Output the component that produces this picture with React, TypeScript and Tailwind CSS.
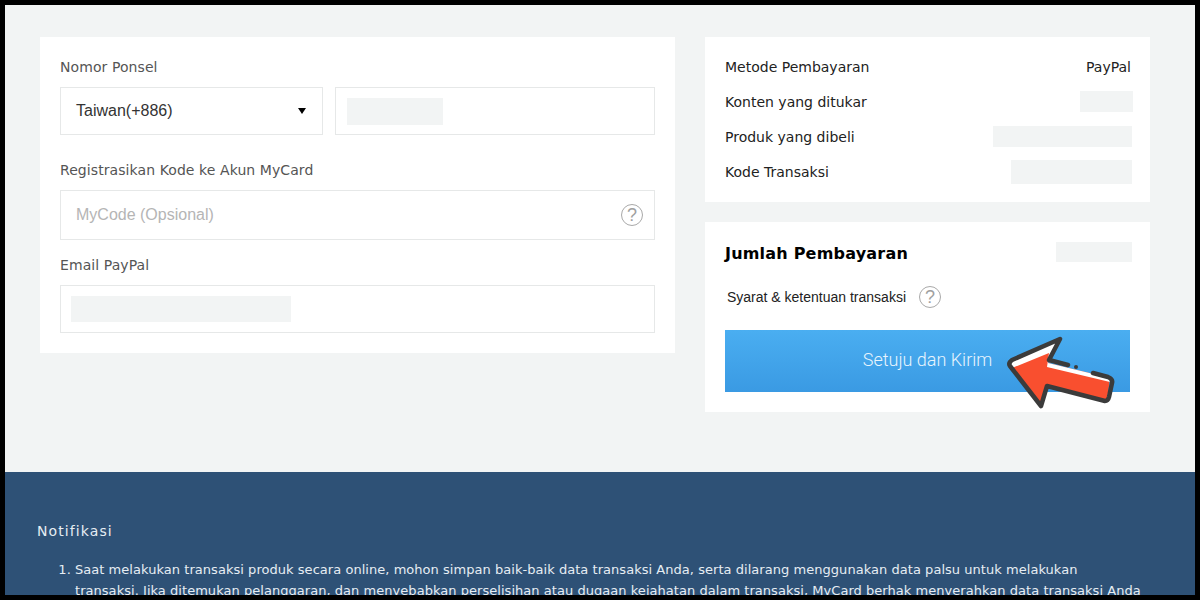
import React from 'react';

const verdana = 'font-["DejaVu_Sans",sans-serif]';
const arial = 'font-["Liberation_Sans",sans-serif]';

function Blank({ className }: { className: string }) {
  return <div className={`bg-[#f2f4f4] ${className}`} />;
}

function Help() {
  return (
    <span className={`flex h-[22px] w-[22px] shrink-0 items-center justify-center rounded-full border border-[#a9a9a9] text-[18px] leading-none text-[#a0a0a0] ${arial}`}>
      ?
    </span>
  );
}

function Arrow() {
  return (
    <svg className="absolute left-[275px] top-0 h-[85px] w-[130px]" viewBox="0 0 130 85" fill="none">
      <path d="M10 33 L58 11 L48 33 L110 48 L107 70 L47 55 L41 75 Z" fill="#f94f2f" />
      <path d="M10 33 L58 11 L50 24 L48 33 L110 48 L110 52 L47 37 L49 23 L12 38 Z" fill="#ffffff" />
      <path
        d="M68 35 L49 30 L60 9 L12 30 Q8 33 10 36 L41 76 L47 56 L105 71 Q108 71 109 67 L112 53 Q113 49 108 47 L93 43"
        stroke="#3b3b3b"
        strokeWidth="4.5"
        strokeLinecap="round"
        strokeLinejoin="round"
      />
      <circle cx="76" cy="37" r="2" fill="#3b3b3b" />
    </svg>
  );
}

export default function App() {
  return (
    <div className="h-[600px] w-[1200px] overflow-hidden border-[5px] border-black bg-[#f2f4f4]">
      <div className="flex h-[467px] gap-[30px] pl-[35px] pr-[45px] pt-[32px]">
        <div className={`h-[316px] w-[635px] bg-white px-5 pt-[20px] ${verdana}`}>
          <div className="text-sm leading-5 tracking-[0.08px] text-[#555]">Nomor Ponsel</div>
          <div className="mt-[10px] flex gap-3">
            <div className={`flex h-12 w-[263px] items-center justify-between border border-[#e6e8e8] pl-[15px] pr-[15px] text-base text-[#333] ${arial}`}>
              <span>Taiwan(+886)</span>
              <span className="mr-px h-0 w-0 border-x-[4.5px] border-t-[6px] border-x-transparent border-t-black" />
            </div>
            <div className="flex h-12 w-[320px] items-center border border-[#e6e8e8] pl-[11px]">
              <Blank className="h-[27px] w-24" />
            </div>
          </div>
          <div className="mt-[25px] text-sm leading-5 tracking-[0.08px] text-[#555]">Registrasikan Kode ke Akun MyCard</div>
          <div className={`mt-[10px] flex h-[50px] items-center justify-between border border-[#e6e8e8] pl-[15px] pr-[11px] text-base text-[#b5b5b5] ${arial}`}>
            <span>MyCode (Opsional)</span>
            <Help />
          </div>
          <div className="mt-[15px] text-sm leading-5 tracking-[0.08px] text-[#555]">Email PayPal</div>
          <div className="mt-[10px] flex h-[48px] items-center border border-[#e6e8e8] pl-[10px]">
            <Blank className="h-[26px] w-[220px]" />
          </div>
        </div>

        <div className="flex w-[445px] flex-col gap-5">
          <div className={`flex h-[165px] flex-col bg-white pl-5 pr-[18px] pt-[17px] text-sm text-[#222] ${verdana}`}>
            <div className="flex h-[25px] items-center justify-between">
              <span>Metode Pembayaran</span>
              <span className="pr-px">PayPal</span>
            </div>
            <div className="mt-[10px] flex h-[25px] items-center justify-between">
              <span>Konten yang ditukar</span>
              <Blank className="-mr-px h-[21px] w-[53px]" />
            </div>
            <div className="mt-[10px] flex h-[25px] items-center justify-between">
              <span>Produk yang dibeli</span>
              <Blank className="h-[21px] w-[139px]" />
            </div>
            <div className="mt-[10px] flex h-[25px] items-center justify-between">
              <span>Kode Transaksi</span>
              <Blank className="h-6 w-[121px]" />
            </div>
          </div>

          <div className="flex h-[190px] flex-col bg-white pl-5 pr-5 pt-5">
            <div className="flex h-5 items-center justify-between">
              <span className={`pt-1 text-base font-bold tracking-[0.2px] text-black ${verdana}`}>Jumlah Pembayaran</span>
              <Blank className="-mr-[2px] h-5 w-[76px]" />
            </div>
            <div className={`mt-[24px] flex h-[22px] items-center gap-[13px] pl-[2px] text-sm text-[#222] ${arial}`}>
              <span>Syarat &amp; ketentuan transaksi</span>
              <Help />
            </div>
            <div className="relative mt-[22px] flex h-[62px] w-[405px] items-center justify-center bg-gradient-to-b from-[#4aaef1] to-[#3a9ae3] pb-[2px] font-['Roboto',sans-serif] text-lg font-light text-[#e8f4fd]">
              Setuju dan Kirim
              <Arrow />
            </div>
          </div>
        </div>
      </div>

      <div className={`h-[128px] overflow-hidden bg-[#2e5176] pl-8 pr-[52px] pt-[49px] text-[#e6edf3] ${verdana}`}>
        <div className="text-sm leading-5 tracking-[1.1px]">Notifikasi</div>
        <ol className="mt-[18px] list-decimal pl-[38px] text-[13px] leading-[21px] tracking-[0.04px]">
          <li>
            Saat melakukan transaksi produk secara online, mohon simpan baik-baik data transaksi Anda, serta dilarang menggunakan data palsu untuk melakukan transaksi. Jika ditemukan pelanggaran, dan menyebabkan perselisihan atau dugaan kejahatan dalam transaksi, MyCard berhak menyerahkan data transaksi Anda
          </li>
        </ol>
      </div>
    </div>
  );
}
